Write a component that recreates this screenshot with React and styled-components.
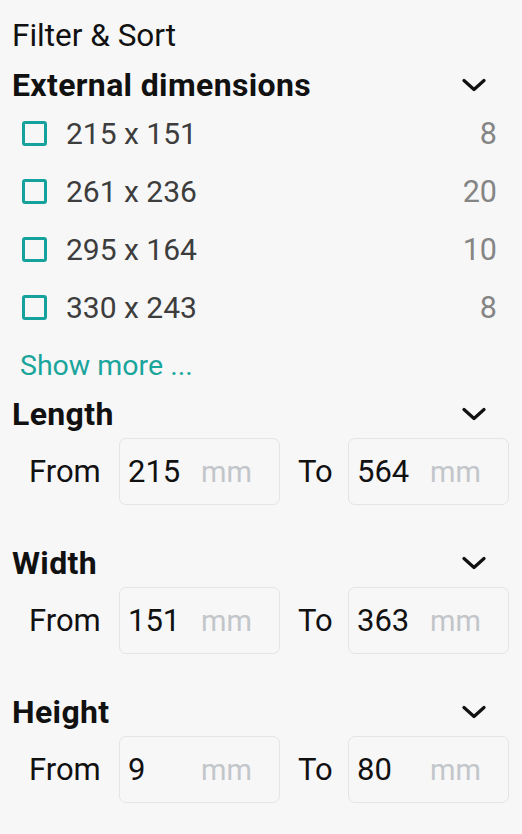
import React from "react";
import styled, { createGlobalStyle } from "styled-components";

const Global = createGlobalStyle`
  html, body { margin: 0; padding: 0; background: #f7f7f7; }
  body { font-family: Roboto, "Noto Sans", sans-serif; -webkit-font-smoothing: antialiased; }
`;

const Panel = styled.div`
  width: 522px;
  box-sizing: border-box;
  padding: 12px 0 0 12px;
  display: flex;
  flex-direction: column;
`;

const Title = styled.div`
  font-size: 31.5px;
  line-height: 48px;
  color: #111;
`;

const SectionHeader = styled.div`
  display: flex;
  align-items: center;
  justify-content: space-between;
  height: 40px;
  padding-right: 36px;
  margin-top: ${(p) => p.$mt || 0}px;
`;

const HeaderText = styled.div`
  font-size: 32px;
  font-weight: 700;
  letter-spacing: 0.35px;
  color: #111;
`;

const Chevron = () => (
  <svg width="24" height="24" viewBox="0 0 24 24" fill="none">
    <path d="M2 7.5 L12 16.5 L22 7.5" stroke="#111" strokeWidth="3.2" strokeLinecap="round" strokeLinejoin="round" />
  </svg>
);

const OptionList = styled.div`
  display: flex;
  flex-direction: column;
  margin-top: -1px;
`;

const OptionRow = styled.label`
  display: flex;
  align-items: center;
  height: 58px;
  padding-left: 10px;
  padding-right: 25px;
`;

const Box = styled.span`
  width: 25px;
  height: 25px;
  box-sizing: border-box;
  border: 3.5px solid #16a29c;
  border-radius: 3px;
  flex: none;
`;

const OptionLabel = styled.span`
  margin-left: 19px;
  font-size: 30px;
  color: #3d3d3d;
  flex: 1;
`;

const Count = styled.span`
  font-size: 30.5px;
  color: #858585;
`;

const ShowMore = styled.a`
  display: block;
  margin-top: 10px;
  padding-left: 8px;
  font-size: 28.5px;
  line-height: 40px;
  color: #1aa59c;
  text-decoration: none;
`;

const RangeSection = styled.div`
  display: flex;
  flex-direction: column;
  margin-top: ${(p) => p.$mt}px;
`;

const RangeRow = styled.div`
  display: flex;
  align-items: center;
  margin-top: 4px;
  padding-left: 17px;
  gap: 18px;
`;

const RangeLabel = styled.span`
  font-size: 31px;
  color: #111;
  width: ${(p) => p.$w}px;
`;

const Field = styled.div`
  width: 161px;
  height: 67px;
  box-sizing: border-box;
  border: 1px solid #e4e4e4;
  border-radius: 7px;
  display: flex;
  align-items: center;
  padding-left: 8px;
`;

const Value = styled.input`
  width: 73px;
  border: none;
  background: transparent;
  padding: 0;
  font-family: inherit;
  font-size: 31px;
  color: #111;
  outline: none;
`;

const Unit = styled.span`
  font-size: 29px;
  color: #c2c6ca;
`;

const options = [
  ["215 x 151", 8],
  ["261 x 236", 20],
  ["295 x 164", 10],
  ["330 x 243", 8],
];

const ranges = [
  ["Length", "215", "564"],
  ["Width", "151", "363"],
  ["Height", "9", "80"],
];

const RangeField = ({ value }) => (
  <Field>
    <Value defaultValue={value} readOnly />
    <Unit>mm</Unit>
  </Field>
);

export default function App() {
  return (
    <>
      <Global />
      <Panel>
        <Title>Filter &amp; Sort</Title>
        <SectionHeader $mt={5}>
          <HeaderText>External dimensions</HeaderText>
          <Chevron />
        </SectionHeader>
        <OptionList>
          {options.map(([l, c]) => (
            <OptionRow key={l}>
              <Box />
              <OptionLabel>{l}</OptionLabel>
              <Count>{c}</Count>
            </OptionRow>
          ))}
        </OptionList>
        <ShowMore href="#">Show more ...</ShowMore>
        {ranges.map(([name, from, to], i) => (
          <RangeSection key={name} $mt={i === 0 ? 8 : 38}>
            <SectionHeader>
              <HeaderText>{name}</HeaderText>
              <Chevron />
            </SectionHeader>
            <RangeRow>
              <RangeLabel $w={72}>From</RangeLabel>
              <RangeField value={from} />
              <RangeLabel $w={32}>To</RangeLabel>
              <RangeField value={to} />
            </RangeRow>
          </RangeSection>
        ))}
      </Panel>
    </>
  );
}
